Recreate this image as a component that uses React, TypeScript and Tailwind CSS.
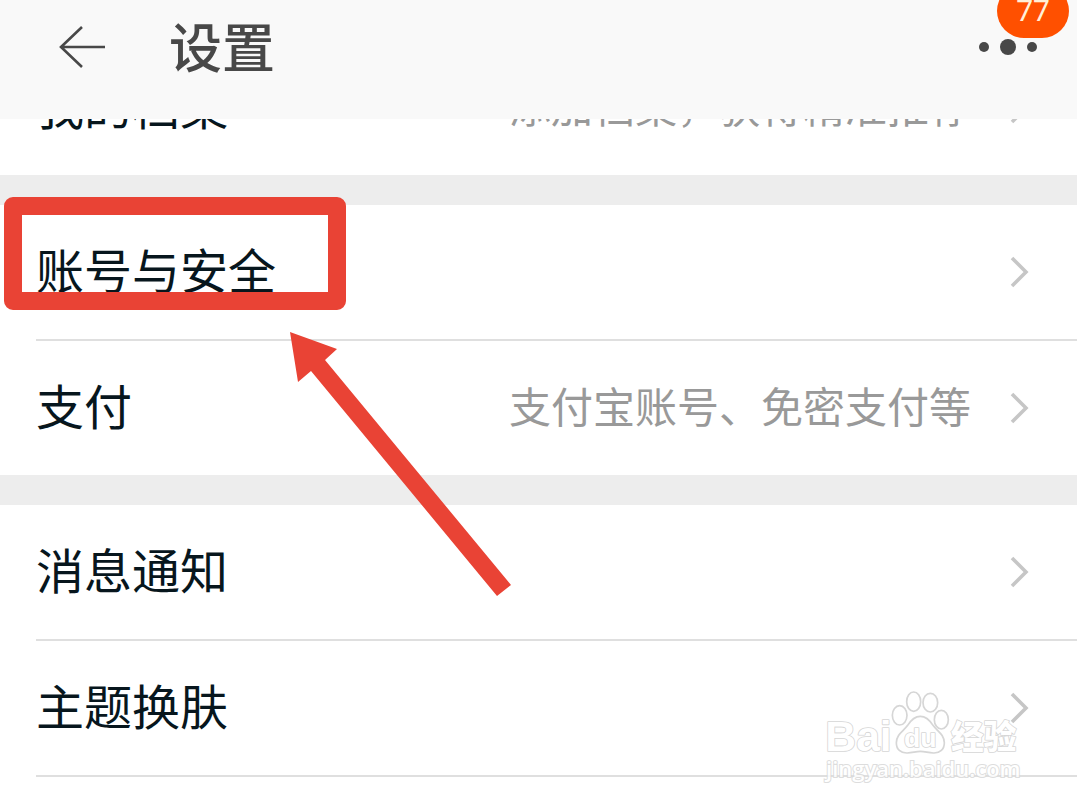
import React from "react";

interface RowProps {
  label: string;
  hint?: string;
  divider?: boolean;
  children?: React.ReactNode;
}

const Chevron = () => (
  <svg className="h-8 w-5 shrink-0" viewBox="0 0 20 32" fill="none">
    <path d="M3 2 L17 16 L3 30" stroke="#c6c6c6" strokeWidth="3.6" />
  </svg>
);

const Row: React.FC<RowProps> = ({ label, hint, divider, children }) => (
  <li className="relative pl-9">
    <a
      href="#"
      className={
        divider
          ? "flex h-[136px] items-center justify-between border-b-2 border-[#dfdfdf] pr-12"
          : "flex h-[134px] items-center justify-between pr-12"
      }
    >
      <span className="pb-2 text-[48px] leading-[64px] text-[#07161d]">{label}</span>
      <span className="flex items-center gap-[38px]">
        {hint && <span className="pb-1.5 text-[42px] leading-[64px] text-[#999999]">{hint}</span>}
        <Chevron />
      </span>
    </a>
    {children}
  </li>
);

// Red frame and pointer drawn over the account row
const Highlight = () => (
  <>
    <div className="pointer-events-none absolute -top-2 left-1 z-10 h-[113px] w-[342px] rounded-[9px] border-[18px] border-[#e94335]" />
    <svg
      className="pointer-events-none absolute left-[290px] top-[127px] z-10 h-[266px] w-[222px]"
      viewBox="0 0 222 266"
    >
      <polygon points="0,0 47,17 35,28 221,253 207,264 21,39 8,50" fill="#e94335" />
    </svg>
  </>
);

const Watermark = () => (
  <div className="pointer-events-none absolute left-[826px] top-[690px] z-10 w-[194px] opacity-85">
    <svg
      className="h-16 w-48 overflow-visible"
      viewBox="78 60 576 192"
      fill="#ffffff"
      stroke="#cfcfcf"
      strokeWidth="5"
      strokeLinejoin="round"
    >
      <text
        x="76"
        y="244"
        fontSize="128"
        fontWeight="700"
        fontFamily="Liberation Sans, sans-serif"
        paintOrder="stroke"
      >
        Bai
      </text>
      <ellipse cx="299" cy="136" rx="22" ry="29" />
      <ellipse cx="341" cy="95" rx="21" ry="29" />
      <ellipse cx="391" cy="98" rx="22" ry="28" />
      <ellipse cx="424" cy="149" rx="21" ry="28" />
      <path d="M361 139 C343 139 333 150 323 166 C310 184 290 192 289 218 C289 238 302 250 322 249 C338 248 348 244 361 244 C374 244 384 248 400 249 C420 250 433 238 433 218 C432 192 412 184 399 166 C389 150 379 139 361 139 Z" />
      <text
        x="312"
        y="232"
        fontSize="80"
        fontWeight="700"
        fontFamily="Liberation Sans, sans-serif"
        paintOrder="stroke"
      >
        du
      </text>
      <text
        x="453"
        y="236"
        fontSize="98"
        fontWeight="900"
        fontFamily="Noto Sans CJK SC, sans-serif"
        paintOrder="stroke"
      >
        经验
      </text>
    </svg>
    <p className="-mt-0.5 font-['Open_Sans'] text-[22px] leading-8 font-semibold text-white [-webkit-text-stroke:2px_#d8d8d8] [paint-order:stroke]">
      jingyan.baidu.com
    </p>
  </div>
);

export default function App() {
  return (
    <div className="relative min-h-screen overflow-hidden bg-white font-['Noto_Sans_CJK_SC',sans-serif]">
      <header className="relative z-20 flex h-[119px] items-start bg-[#f9f9f9] pl-[59px] pr-9">
        <button type="button" aria-label="返回" className="mt-6 h-12">
          <svg className="h-12 w-12" viewBox="0 0 48 48" fill="none" stroke="#484848" strokeWidth="2.6">
            <path d="M23 3 L2 23 L23 43 M2 23 H46" />
          </svg>
        </button>
        <h1 className="ml-[62px] mt-3 text-[53px] leading-[66px] font-medium text-[#484848]">设置</h1>
        <button type="button" aria-label="更多" className="relative ml-auto mt-9 h-6">
          <svg className="h-6 w-16" viewBox="0 0 64 24" fill="#484848">
            <circle cx="7" cy="11" r="5" />
            <circle cx="31" cy="11" r="8" />
            <circle cx="55" cy="11" r="5" />
          </svg>
          <span className="absolute -right-7 bottom-[22px] flex h-[54px] w-[72px] items-center justify-center rounded-full bg-[#ff5000] font-['Roboto'] text-[30px] leading-none text-[#fff0d8]">
            77
          </span>
        </button>
      </header>

      <main className="-mt-[78px] divide-y-[30px] divide-[#ededed]">
        <ul>
          <Row label="我的档案" hint="添加档案，获得精准推荐" />
        </ul>
        <ul>
          <Row label="账号与安全" divider>
            <Highlight />
          </Row>
          <Row label="支付" hint="支付宝账号、免密支付等" />
        </ul>
        <ul>
          <Row label="消息通知" divider />
          <Row label="主题换肤" divider />
        </ul>
      </main>

      <Watermark />
    </div>
  );
}
